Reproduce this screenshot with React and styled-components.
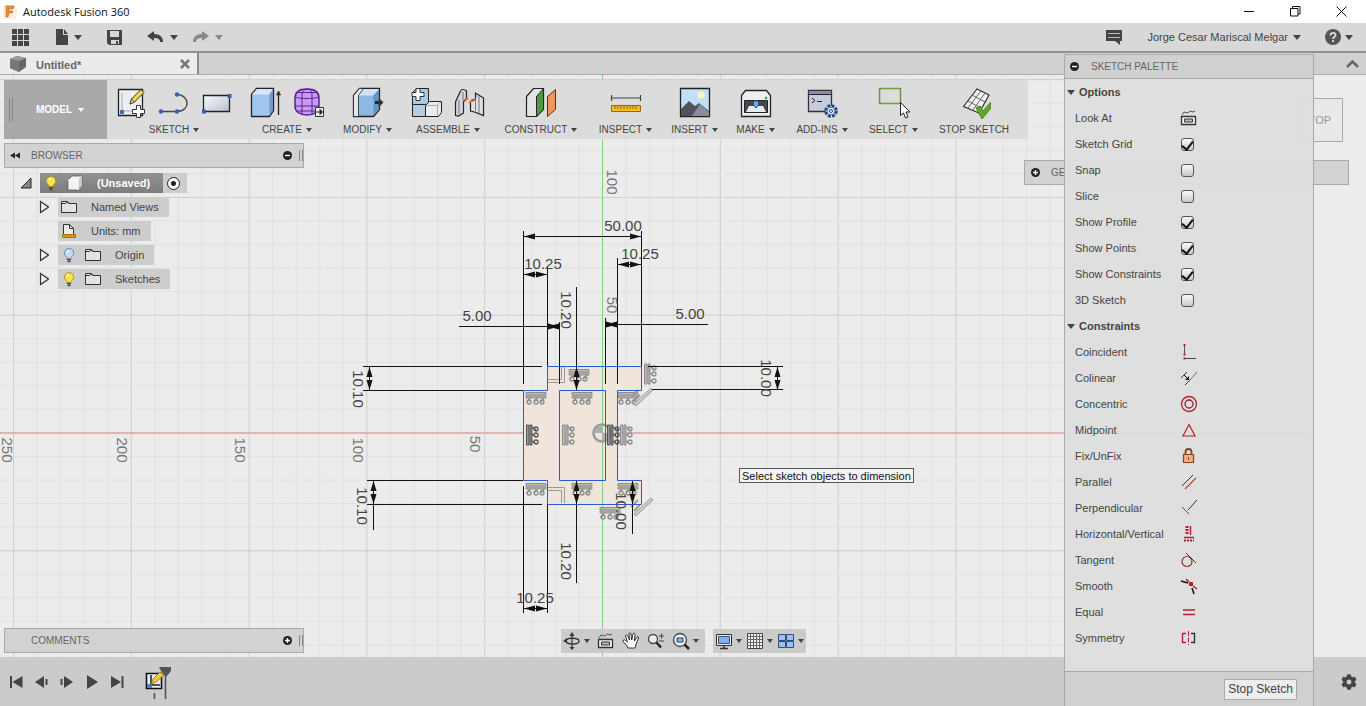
import React from "react";
import styled, { createGlobalStyle, css } from "styled-components";
import { FaCog } from "react-icons/fa";

const GlobalStyle = createGlobalStyle`
  * { box-sizing: border-box; }
  body {
    margin: 0;
    font-family: "Liberation Sans", Arial, sans-serif;
    font-size: 11px;
    color: #444;
  }
  button {
    font: inherit;
    color: inherit;
    background: none;
    border: 0;
    padding: 0;
  }
  svg { display: block; flex: none; }
`;

const App = styled.div`
  position: relative;
  display: flex;
  flex-direction: column;
  height: 100vh;
  min-width: 1100px;
  overflow: hidden;
  background: #ececec;
`;

// Title bar
const TitleBar = styled.header`
  display: flex;
  align-items: center;
  gap: 6px;
  height: 23px;
  padding: 0 2px 0 3px;
  background: #fff;
  color: #111;
`;

const AppTitle = styled.h1`
  margin: 0;
  flex: 1;
  font: 400 11px "Open Sans", sans-serif;
`;

const WindowButtons = styled.div`
  display: flex;
`;

const WindowButton = styled.button`
  display: grid;
  place-items: center;
  width: 46px;
  height: 21px;
`;

// Quick access bar
const QuickBar = styled.div`
  display: flex;
  align-items: center;
  gap: 24px;
  height: 30px;
  padding: 0 13px 0 10px;
  background: #d8d8d8;
  border-bottom: 2px solid #929292;
`;

const QuickPair = styled.div`
  display: flex;
  gap: 14px;
`;

const IconButton = styled.button`
  display: flex;
  align-items: center;
  gap: ${({ $gap }) => $gap || 0}px;
  color: ${({ $color }) => $color || "#444"};
`;

const Spacer = styled.div`
  flex: 1;
`;

const Caret = styled.span`
  display: inline-block;
  border: solid transparent;
  border-width: 5px 4px 0;
  border-top-color: currentColor;
`;

const SmallCaret = styled(Caret)`
  border-width: 4px 3px 0;
`;

// Document tabs
const TabStrip = styled.div`
  display: flex;
  align-items: center;
  justify-content: space-between;
  height: 22px;
  padding-right: 7px;
  background: #d0d0d0;
  border-bottom: 1px solid #aaa;
`;

const Tab = styled.div`
  display: flex;
  align-items: center;
  gap: 9px;
  width: 199px;
  height: 21px;
  padding: 0 7px 0 9px;
  background: #ebebeb;
  border-right: 2px solid #8c8c8c;
  font-weight: 700;
  color: #666;

  span { flex: 1; padding-top: 3px; }
`;

// Workspace
const Workspace = styled.main`
  position: relative;
  display: flex;
  flex: 1;
  flex-direction: column;
  min-height: 0;
  padding: 5px 4px 4px;
`;

const Canvas = styled.svg`
  position: absolute;
  inset: 0;
  width: 100%;
  height: 100%;
`;

const Toolbar = styled.div`
  position: relative;
  display: flex;
  align-self: flex-start;
  height: 59px;
  padding-right: 8px;
  background: #dcdcdc;
`;

const ModelButton = styled.button`
  display: flex;
  align-items: center;
  gap: 6px;
  width: 103px;
  padding-left: 5px;
  background: #a9a9a9;
  color: #fff;
  font-size: 10px;
  font-weight: 700;
`;

const Grip = styled.i`
  width: 4px;
  height: ${({ $height }) => $height}px;
  margin-right: ${({ $after }) => $after || 0}px;
  border: solid #888;
  border-width: 0 1px;
`;

const Group = styled.div`
  display: flex;
  flex-direction: column;
  align-items: center;
  gap: 4px;
  width: ${({ $width }) => $width}px;
  padding-top: 6px;
  position: relative;

  & + &::before {
    content: "";
    position: absolute;
    left: 0;
    top: 5px;
    bottom: 5px;
    width: 1px;
    background: #bfbfbf;
  }
`;

const GroupIcons = styled.div`
  display: flex;
  gap: 9px;
`;

const GroupLabel = styled.button`
  display: flex;
  align-items: center;
  gap: 4px;
  font-size: 10px;
  line-height: 12px;
  white-space: nowrap;
`;

const Middle = styled.div`
  position: relative;
  display: flex;
  flex: 1;
  justify-content: space-between;
  align-items: flex-start;
  padding: 4px 13px 0 0;
`;

const PanelBar = styled.div`
  display: flex;
  align-items: center;
  width: ${({ $width }) => $width || 300}px;
  height: 25px;
  padding: 0 0 0 5px;
  background: #d2d2d2;
  border: 1px solid #aaa;
  font-size: 10px;
  color: #666;

  h2 {
    flex: 1;
    margin: 0;
    padding-left: 10px;
    font-size: 10px;
    font-weight: 400;
  }
`;

const RightDock = styled.div`
  padding-top: 17px;
`;

const PanelGap = styled.span`
  width: 6px;
`;

const Tree = styled.ul`
  list-style: none;
  margin: 3px 0 0;
  padding: 0;
`;

const TreeRow = styled.li`
  display: flex;
  align-items: center;
  gap: ${({ $root }) => ($root ? 8 : 9)}px;
  height: 24px;
  padding-left: ${({ $root }) => ($root ? 16 : 33)}px;
`;

const Twisty = styled.button`
  width: 12px;
  height: 14px;
`;

const TreeItem = styled.div`
  display: flex;
  align-items: center;
  gap: 8px;
  height: 20px;
  padding: 0 10px 0 3px;
  background: #cdcdcd;

  span { padding-left: 6px; }

  ${({ $active }) => $active && css`
    padding-right: 13px;
    background: linear-gradient(#929292, #7c7c7c);
    color: #fff;
    font-weight: 700;
  `}
`;

const RootGroup = styled.div`
  display: flex;
  align-items: center;
  background: #cdcdcd;
`;

const Activate = styled.input`
  appearance: none;
  width: 13px;
  height: 13px;
  margin: 0 7px 0 4px;
  border: 1px solid #222;
  border-radius: 50%;
  background: radial-gradient(circle, #222 0 2px, #fff 3px);
`;

const Bottom = styled.div`
  position: relative;
  display: grid;
  grid-template-columns: 1fr auto 1fr;
  align-items: center;
`;

const NavBars = styled.nav`
  display: flex;
  gap: 8px;
`;

const NavBar = styled.div`
  display: flex;
  align-items: center;
  gap: ${({ $gap }) => $gap}px;
  height: 24px;
  padding: ${({ $pad }) => $pad};
  background: #cbcbcb;
`;

const ViewCube = styled.button`
  position: absolute;
  top: 23px;
  right: 23px;
  width: 46px;
  height: 44px;
  border: 1px solid #aaa;
  background: #e9e9e9;
  color: #999;
  font-size: 11px;
`;

const Hint = styled.div`
  position: absolute;
  left: 739px;
  top: 393px;
  height: 15px;
  padding: 0 2px;
  border: 1px solid #555;
  background: #f4f4f4;
  color: #111;
  line-height: 14px;
  white-space: nowrap;
`;

// Timeline
const Timeline = styled.footer`
  display: flex;
  align-items: center;
  height: 49px;
  padding: 0 9px 0 8px;
  background: #cbcbcb;
  color: #444;
`;

const Playback = styled.div`
  display: flex;
  gap: 7px;
  margin-right: 17px;
`;

// Sketch palette
const Palette = styled.aside`
  position: absolute;
  top: 54px;
  right: 52px;
  bottom: 0;
  display: flex;
  flex-direction: column;
  width: 250px;
  border: solid #aaa;
  border-width: 1px 1px 0;
  background: rgba(222, 222, 222, 0.97);
`;

const PaletteHeader = styled.div`
  display: flex;
  align-items: center;
  gap: 11px;
  height: 24px;
  padding-left: 4px;
  background: #d0d0d0;
  border-bottom: 1px solid #aaa;
  color: #666;
  font-size: 10px;
`;

const PaletteSection = styled.h3`
  display: flex;
  align-items: center;
  gap: 4px;
  height: 26px;
  margin: 0;
  padding-left: 2px;
  font-size: 11px;
`;

const rowStyle = css`
  display: grid;
  grid-template-columns: 105px 18px;
  align-items: center;
  width: 100%;
  height: 26px;
  padding-left: 10px;
  text-align: left;
`;

const OptionRow = styled.label`
  ${rowStyle}
`;

const CommandRow = styled.button`
  ${rowStyle}
`;

const Check = styled.input`
  appearance: none;
  display: flex;
  justify-content: center;
  align-items: flex-start;
  width: 13px;
  height: 13px;
  margin: 0 0 0 1px;
  border: 1px solid #555;
  border-radius: 3px;
  background: linear-gradient(#fafafa, #c8c8c8);

  &:checked::before {
    content: "";
    width: 5px;
    height: 9px;
    border: solid #111;
    border-width: 0 2px 2px 0;
    transform: rotate(38deg);
  }
`;

const PaletteFooter = styled.div`
  display: flex;
  align-items: center;
  justify-content: flex-end;
  height: 35px;
  margin-top: auto;
  padding-right: 16px;
  border-top: 1px solid #aaa;
  background: #d0d0d0;
`;

const StopButton = styled.button`
  height: 21px;
  padding: 0 3px;
  border: 1px solid #aaa;
  background: #ededed;
  font-size: 12px;
`;

const Icon = ({ size = 18, h, box, children, ...rest }) => (
  <svg width={size} height={h || size} viewBox={box || `0 0 ${size} ${h || size}`} fill="none" stroke="currentColor" aria-hidden="true" {...rest}>
    {children}
  </svg>
);

const Dot = ({ plus }) => (
  <Icon size={11}>
    <circle cx="5.5" cy="5.5" r="4.5" fill="#222" stroke="none" />
    <path d={plus ? "M3 5.5h5M5.5 3v5" : "M3 5.5h5"} stroke="#fff" strokeWidth="1.4" />
  </Icon>
);

const Bulb = ({ off }) => (
  <Icon size={16}>
    <path d="M8 1.500a4.500 4.500 0 0 0-3 8c1 1 1 1.500 1 2.500h4c0-1 0-1.500 1-2.500a4.500 4.500 0 0 0-3-8z" fill={off ? "#c4dafa" : "#fbe14c"} stroke={off ? "#7288b4" : "#b8932a"} />
    <path d="M6 12.500h4M6.500 14.500h3" stroke="#444" strokeWidth="1.500" />
    <path d="M6 5.500a2 2 0 0 1 2-2" stroke="#fff" />
  </Icon>
);

const Folder = () => (
  <Icon size={16}>
    <path d="M.5 13.500v-11h6l1 2h8v9z" fill="#e2e2e2" stroke="#333" />
    <path d="M.5 4.500h4l1-1h2" stroke="#333" />
  </Icon>
);

const CubeIcon = () => (
  <Icon size={16}>
    <path d="M1 5l4-4h10v10l-4 4H1z" fill="#f2f2f2" stroke="#555" strokeWidth=".7" />
    <path d="M11 5l4-4v10l-4 4z" fill="#c9c9c9" stroke="none" />
    <path d="M1 5h10v10" stroke="#fff" />
  </Icon>
);

const UnitsIcon = () => (
  <Icon size={16}>
    <path d="M2.500 12V1.500h6l4 4V12" fill="#eee" stroke="#333" />
    <path d="M8.500 1.500v4h4" stroke="#333" />
    <path d="M1.500 11.500h13v3h-13z" fill="#e9a817" stroke="#a8730b" />
    <path d="M4 12v1.500M7 12v1.500M10 12v1.500M13 12v1.500" stroke="#7a5200" strokeWidth=".7" />
  </Icon>
);

const toolIcons = {
  newSketch: (
    <Icon size={34}>
      <path d="M4.500 3.500h24v26h-24z" fill="#eceef3" stroke="#222" strokeWidth="1.300" />
      <path d="M8 7v18h14" stroke="#999" strokeWidth=".8" />
      <path d="M6 24h4v4H6z" fill="#3c70b8" stroke="none" />
      <path d="M16 18l1.500-5L27 3.500l3 3-9.500 9.500z" fill="#f5d548" stroke="#333" />
      <path d="M16 18l1.500-5 3 3z" fill="#f2d7b0" stroke="#333" strokeWidth=".8" />
      <path d="M22.500 19.500h4v4h4v4h-4v4h-4v-4h-4v-4h4z" fill="#fff" stroke="#333" />
    </Icon>
  ),
  line: (
    <Icon size={34}>
      <path d="M4 25.500h16c14 0 13-17-.500-17" stroke="#444" strokeWidth="1.300" />
      <circle cx="4" cy="25.500" r="2.200" fill="#3461b4" stroke="none" />
      <circle cx="20" cy="25.500" r="2.200" fill="#3461b4" stroke="none" />
      <circle cx="20" cy="8.500" r="2.200" fill="#3461b4" stroke="none" />
    </Icon>
  ),
  rectangle: (
    <Icon size={34}>
      <defs>
        <linearGradient id="rectFill" x1="0" y1="0" x2="1" y2="1">
          <stop offset="0" stopColor="#fafbfd" />
          <stop offset="1" stopColor="#b9bfcc" />
        </linearGradient>
      </defs>
      <path d="M3.500 9.500h26v16h-26z" fill="url(#rectFill)" stroke="#222" strokeWidth="1.300" />
      <path d="M2 23.500h4v4H2zM27.500 8h4v4h-4z" fill="#3461b4" stroke="none" />
    </Icon>
  ),
  extrude: (
    <Icon size={34}>
      <path d="M2.500 8.500l5-6h17v22l-4 6h-18z" fill="#9fc6ec" stroke="#222" strokeWidth="1.300" />
      <path d="M3 8.500l5-5.500h16l-4 5.500z" fill="#d6e8fa" stroke="none" />
      <path d="M20.500 8.500l3.500-5v21l-3.500 5z" fill="#6e9cce" stroke="none" />
      <path d="M29.500 29V6" stroke="#222" strokeWidth="1.300" />
      <path d="M27.500 9l2-4 2 4z" fill="#222" />
    </Icon>
  ),
  form: (
    <Icon size={34}>
      <path d="M3 12c0-6 4-9 12-9s12 3 12 9v8c0 6-5 9-12 9S3 26 3 20z" fill="#c89bf5" stroke="#5c2096" strokeWidth="1.500" />
      <path d="M3 11c5 2 19 2 24 0M3 20h24M10 9v19M20 9v19M10 9c0-4 3-6 5-6M20 9c0-4-2-6-5-6M6 6.500h18M5 25h20" stroke="#5c2096" />
      <path d="M23.500 21.500h8v9h-8z" fill="#eee" stroke="#333" />
      <path d="M24 26h4v-2.500l2.500 2.500-2.500 2.500V26" fill="#222" stroke="#222" />
    </Icon>
  ),
  pressPull: (
    <Icon size={34}>
      <path d="M2.500 9.500l6-7h20v21l-6 7h-20z" fill="#8db8e4" stroke="#222" strokeWidth="1.300" />
      <path d="M2.500 9.500l6-7h4l-5 7v21h-5z" fill="#e2e7ee" stroke="#222" strokeWidth=".8" />
      <path d="M8 9.500l5-6.500h15l-6 6.500z" fill="#cfe2f6" stroke="none" />
      <path d="M22.500 9.500l5.500-6v20l-5.500 6z" fill="#6693c7" stroke="none" />
      <path d="M24 16.500h5" stroke="#222" strokeWidth="3" />
      <path d="M28 12.500l4 4-4 4z" fill="#222" />
    </Icon>
  ),
  component: (
    <Icon size={34}>
      <path d="M2.500 6.500l4-4h12v15l-3 3h-13z" fill="#a9c8ea" stroke="#222" />
      <path d="M2.500 18.500h13v12h-13z" fill="#b7cbe0" stroke="#222" />
      <path d="M15.500 19.500l4-4h12v11l-3 4h-13z" fill="#e8ebef" stroke="#222" />
      <path d="M15.500 19.500h12v10M27.500 19.500l4-4" stroke="#aaa" />
      <path d="M6 2.500h4v4h4v4h-4v4H6v-4H2v-4h4z" fill="#fff" stroke="#333" />
    </Icon>
  ),
  joint: (
    <Icon size={34}>
      <path d="M2.500 29.500V16l5-11c1-2 4-2 6 0v7l-3 4v11l-5 3z" fill="#d3d8de" stroke="#222" strokeWidth="1.200" />
      <path d="M6 14v14M10 6v10" stroke="#777" />
      <path d="M30.500 29.500V12l-8-5v6l-5 3v9l4 1z" fill="#dde0e5" stroke="#222" strokeWidth="1.200" />
      <path d="M22.500 12v13M26 10v17" stroke="#777" />
      <path d="M12 15l3-3M16 17l4-4" stroke="#e8762c" strokeWidth="2" />
    </Icon>
  ),
  plane: (
    <Icon size={34}>
      <path d="M2.500 10.500l7-8h10v21l-7 7h-10z" fill="#e1e3e6" stroke="#222" strokeWidth="1.200" />
      <path d="M12.500 10.500l7-8v21l-7 7z" fill="#4c9a3c" stroke="#222" />
      <path d="M23.500 10.500l8-7v20l-8 7z" fill="#f0975a" stroke="#5b3018" />
    </Icon>
  ),
  measure: (
    <Icon size={34}>
      <path d="M2.500 9v6M31.500 9v6M3 12h28" stroke="#444" strokeWidth="1.200" />
      <path d="M2.500 19.500h29v6h-29z" fill="#f4bd2c" stroke="#99690c" />
      <path d="M6 20v3M9 20v3M12 20v3M15 20v3M18 20v3M21 20v3M24 20v3M27 20v3" stroke="#79540b" strokeWidth=".8" />
    </Icon>
  ),
  image: (
    <Icon size={34}>
      <path d="M2.500 2.500h29v28h-29z" fill="#bfe0f6" stroke="#222" strokeWidth="1.300" />
      <circle cx="23" cy="9" r="3.500" fill="#fdf5bd" stroke="none" />
      <path d="M3 23l8-8 6 5 4-3 10 8v5H3z" fill="#50535f" stroke="none" />
      <path d="M14 30l8-12 9 8v4z" fill="#888d99" stroke="none" />
    </Icon>
  ),
  printer: (
    <Icon size={34}>
      <path d="M2.500 9.500l4-5h21l4 5v21h-29z" fill="#eceef0" stroke="#222" strokeWidth="1.300" />
      <path d="M5.500 14.500h23v12h-23z" fill="#444851" stroke="#222" />
      <path d="M10 20h14l3 6H7z" fill="#e8eaee" stroke="none" />
      <path d="M14.500 15h5v4l-2.500 3-2.500-3z" fill="#78aaf0" stroke="#234a88" />
      <circle cx="27" cy="12" r="1.200" fill="#24a838" stroke="none" />
    </Icon>
  ),
  addins: (
    <Icon size={34}>
      <path d="M3.500 4.500h23v21h-23z" fill="#c7cbdc" stroke="#333" strokeWidth="1.300" />
      <path d="M4 6.500h22" stroke="#8a8fa4" strokeWidth="3" />
      <path d="M4 8.500h22M7 12l3 2.500L7 17M12 15.500h5" stroke="#222" />
      <circle cx="26" cy="25" r="5.500" fill="#d9e8fa" stroke="#1f4678" strokeWidth="2.500" strokeDasharray="3 1.300" />
      <circle cx="26" cy="25" r="4" fill="#d9e8fa" stroke="#3c6fae" />
      <circle cx="26" cy="25" r="1.500" fill="#fff" stroke="#1f4678" />
    </Icon>
  ),
  select: (
    <Icon size={34}>
      <path d="M2.500 2.500h21v15h-21z" stroke="#6e9d3e" strokeWidth="1.600" />
      <path d="M23.500 16.500v13l3-2.500 2 5 2.500-1-2-5h4z" fill="#fff" stroke="#222" />
    </Icon>
  ),
  stop: (
    <Icon size={34}>
      <path d="M6.500 20.500L20 3l12 6-10 18z" fill="#f1f1f1" stroke="#333" strokeWidth="1.200" />
      <path d="M11 22L24 5M16 24L28 7M11 15l13 7M15 9l13 7" stroke="#666" />
      <path d="M19 22l4-2 3 5 8-9v6l-9 11z" fill="#5fa62b" stroke="#4b8a20" />
    </Icon>
  ),
};

const groups = [
  { label: "SKETCH", width: 134, icons: ["newSketch", "line", "rectangle"] },
  { label: "CREATE", width: 92, icons: ["extrude", "form"] },
  { label: "MODIFY", width: 69, icons: ["pressPull"] },
  { label: "ASSEMBLE", width: 92, icons: ["component", "joint"] },
  { label: "CONSTRUCT", width: 94, icons: ["plane"] },
  { label: "INSPECT", width: 75, icons: ["measure"] },
  { label: "INSERT", width: 63, icons: ["image"] },
  { label: "MAKE", width: 59, icons: ["printer"] },
  { label: "ADD-INS", width: 74, icons: ["addins"] },
  { label: "SELECT", width: 69, icons: ["select"] },
  { label: "STOP SKETCH", width: 92, icons: ["stop"], plain: true },
];

const tree = [
  { label: "Named Views", icons: [<Folder key="f" />], open: true },
  { label: "Units: mm", icons: [<UnitsIcon key="u" />] },
  { label: "Origin", icons: [<Bulb key="b" off />, <Folder key="f" />], open: true },
  { label: "Sketches", icons: [<Bulb key="b" />, <Folder key="f" />], open: true },
];

const options = [
  ["Sketch Grid", true],
  ["Snap", false],
  ["Slice", false],
  ["Show Profile", true],
  ["Show Points", true],
  ["Show Constraints", true],
  ["3D Sketch", false],
];

const RED = "#b3202c";

const constraints = [
  ["Coincident", <><path d="M4.500 3v9" stroke="#555" /><path d="M4 15.500h12" stroke="#444" /><path d="M3.500 2h2M3.500 11.500h2M3.500 15.500h2" stroke={RED} strokeWidth="2" /></>],
  ["Colinear", <><path d="M1 9l6-6M5 16l5-5" stroke="#333" /><path d="M10 11l7-8" stroke="#a35a3a" /><path d="M4 6l4 4" stroke="#111" /><path d="M9 11V7l-4 4z" fill="#111" stroke="none" /></>],
  ["Concentric", <><circle cx="9" cy="9" r="7.500" stroke={RED} strokeWidth="1.300" /><circle cx="9" cy="9" r="4" stroke="#8a2430" strokeWidth="1.300" /></>],
  ["Midpoint", <path d="M9 3.500L15 15H3z" stroke={RED} strokeWidth="1.200" />],
  ["Fix/UnFix", <><path d="M5.500 8V5a3 3 0 0 1 6 0v3" stroke="#8c3f14" strokeWidth="1.800" /><path d="M3.500 7.500h10v8h-10z" fill="#f2b184" stroke="#8c3f14" strokeWidth="1.200" /><path d="M8.500 10v3" stroke="#8c3f14" /></>],
  ["Parallel", <><path d="M2 13L13 2" stroke="#333" /><path d="M5 16L16 5" stroke="#b0502e" strokeWidth="1.200" /></>],
  ["Perpendicular", <><path d="M8 11l9-10" stroke="#333" /><path d="M2 8l7 7" stroke={RED} /></>],
  ["Horizontal/Vertical", <><path d="M10.500 1v9M4 12.500h10" stroke={RED} strokeWidth="1.500" /><path d="M7 1v9" stroke={RED} strokeWidth="3" strokeDasharray="2 1" /><path d="M4 15.500h10" stroke={RED} strokeWidth="2" strokeDasharray="2 1" /></>],
  ["Tangent", <><circle cx="7" cy="10.500" r="5" stroke="#8c3f24" strokeWidth="1.200" /><path d="M6 2l10 10" stroke="#333" /></>],
  ["Smooth", <><path d="M1 4l7 2M12 11l2 6" stroke="#111" strokeWidth="1.500" /><path d="M6 2l3 3M13 9l4 3" stroke={RED} strokeWidth="1.500" /><path d="M9.500 5.500h3v3h-3z" fill="#d4101c" stroke={RED} /></>],
  ["Equal", <path d="M3 7h12M3 11.500h12" stroke={RED} strokeWidth="1.300" />],
  ["Symmetry", <><path d="M6 4.500H2.500v9H6" stroke={RED} strokeWidth="1.400" /><path d="M11 4.500h3.500v9H11" stroke="#333" strokeWidth="1.400" /><path d="M8.500 2v14" stroke={RED} strokeDasharray="5 1.500" /></>],
];

// Canvas drawing helpers, 10 mm is 23.56 units
const STEP = 23.56;
const OX = 602.5;
const OY = 433;

function gridLines() {
  const lines = [];
  for (let i = -25; i <= 29; i++) {
    const x = OX + i * STEP;
    lines.push(<path key={"v" + i} d={`M${x} 75V657`} stroke={i % 5 === 0 ? "#cecece" : "#e1e1e1"} />);
  }
  for (let i = -15; i <= 9; i++) {
    const y = OY + i * STEP;
    lines.push(<path key={"h" + i} d={`M0 ${y}H1310`} stroke={i % 5 === 0 ? "#cecece" : "#e1e1e1"} />);
  }
  return lines;
}

const Down = ({ x, y }) => <path d={`M${x} ${y}l-3-10h6z`} />;
const Up = ({ x, y }) => <path d={`M${x} ${y}l-3 10h6z`} />;
const Left = ({ x, y }) => <path d={`M${x} ${y}l11-3v6z`} />;
const Right = ({ x, y }) => <path d={`M${x} ${y}l-11-3v6z`} />;

const Label = ({ x, y, turn, children }) => (
  <text x={x} y={y} textAnchor="middle" dominantBaseline="central" transform={turn ? `rotate(90 ${x} ${y})` : undefined}>
    {children}
  </text>
);

const Mark = ({ x, y, turn, dark }) => (
  <g transform={`translate(${x} ${y}) rotate(${turn ? -90 : 0})`} stroke={dark ? "#555" : "#8c8c8c"} fill="none">
    <path d="M-10-5.500h20v2.500h-20zM-10-2h20v2h-20z" fill={dark ? "#999" : "#bbb"} />
    <path d="M-6 0l-3 4M1 0l-3 4M8 0L5 4" strokeWidth="1.500" />
    <circle cx="-7" cy="4" r="2" strokeWidth="1.300" />
    <circle cx="0" cy="4" r="2" strokeWidth="1.300" />
    <circle cx="6" cy="4" r="2" strokeWidth="1.300" />
  </g>
);

const Slash = ({ x, y }) => (
  <g transform={`translate(${x} ${y})`} stroke="#999" fill="#ccc">
    <path d="M-9 7L8-9l2 2L-7 9z" />
    <path d="M-12 0l7-7M-9 4l6-6" strokeWidth="2" />
  </g>
);

const Drawing = () => (
  <Canvas viewBox="0 75 1366 582" preserveAspectRatio="xMidYMid slice" role="img" aria-label="Sketch">
    {gridLines()}
    <path d="M0 433H1310" stroke="#d98f8f" />
    <path d="M547.500 366.500H641.500V390.500H617.500V480.500H641.500V504.500H547.500V480.500H523.500V390.500H547.500z" fill="#efe5da" />
    <path d="M602.500 75V657" stroke="#84cf84" />
    <g fill="none" stroke="#999">
      <path d="M548 382.500h16.500V367M548 379.500h13.500V367M548 487.500h16.500V503M548 490.500h13.500V503" />
    </g>
    <circle cx="602" cy="433" r="8.500" fill="none" stroke="#9a9a9a" strokeWidth="2.500" />
    <path d="M602 433h-8a8 8 0 0 1 8-8zM602 433h8a8 8 0 0 1-8 8z" fill="#b0aca8" />
    {[[536, 398], [582, 398], [628, 398], [579, 375], [536, 489], [582, 489], [628, 489], [610, 513]].map(([x, y]) => (
      <Mark key={x + "-" + y} x={x} y={y} />
    ))}
    <Mark x={532} y={435} turn dark />
    <Mark x={568} y={435} turn />
    <Mark x={613} y={435} turn dark />
    <Mark x={626} y={435} turn />
    <Mark x={650} y={374} turn />
    <Slash x={643} y={397} />
    <Slash x={643} y={507} />
    <g stroke="#111" strokeWidth="1" fill="none">
      <path d="M523.500 231V384M523.500 486V613M547.500 267V366M547.500 504V613M641.500 231V366M617.500 258V384M559.500 322V384M605.500 318V384" />
      <path d="M524 236.500H641M524 274.500H547M618 264.500H641M459 326.500H559M606 324.500H708M524 608.500H547" />
      <path d="M576.500 287V390M576.500 480V583M632.500 480V534M369.500 366V390M373.500 480V530M777.500 366V390" />
      <path d="M363 366.500H542M363 390.500H523M367 480.500H523M367 504.500H542M648 366.500H783M652 389.500H783" />
    </g>
    <g stroke="#2a5bd4" fill="none">
      <path d="M547.500 366.500H641.500V390.500H617.500V480.500H641.500V504.500H547.500V480.500H523.500V390.500H547.500z" />
      <path d="M559.500 390.500h46v90h-46z" />
    </g>
    <g fill="#111">
      <Left x={524} y={236.5} /><Right x={641} y={236.5} />
      <Left x={524} y={274.5} /><Right x={547} y={274.5} />
      <Left x={618} y={264.5} /><Right x={641} y={264.5} />
      <Left x={524} y={608.5} /><Right x={547} y={608.5} />
      <Left x={548} y={326.5} /><Right x={559} y={326.5} />
      <Left x={606} y={324.5} /><Right x={617} y={324.5} />
      <Up x={369.5} y={367} /><Down x={369.5} y={390} />
      <Up x={373.5} y={481} /><Down x={373.5} y={504} />
      <Up x={777.5} y={367} /><Down x={777.5} y={390} />
      <Up x={576.5} y={367} /><Down x={576.5} y={390} />
      <Up x={576.5} y={481} /><Down x={576.5} y={504} />
      <Up x={632.5} y={481} /><Down x={632.5} y={504} />
    </g>
    <g fill="#444" fontSize="15">
      <Label x={623} y={225}>50.00</Label>
      <Label x={543} y={263}>10.25</Label>
      <Label x={640} y={253}>10.25</Label>
      <Label x={477} y={315}>5.00</Label>
      <Label x={690} y={313}>5.00</Label>
      <Label x={535} y={597}>10.25</Label>
      <Label x={566} y={310} turn>10.20</Label>
      <Label x={566} y={561} turn>10.20</Label>
      <Label x={358} y={389} turn>10.10</Label>
      <Label x={362} y={506} turn>10.10</Label>
      <Label x={766} y={378} turn>10.00</Label>
      <Label x={621} y={511} turn>10.00</Label>
    </g>
    <g fill="#777" fontSize="15">
      <Label x={7} y={450} turn>250</Label>
      <Label x={122} y={450} turn>200</Label>
      <Label x={240} y={450} turn>150</Label>
      <Label x={358} y={450} turn>100</Label>
      <Label x={475} y={444} turn>50</Label>
      <Label x={612} y={182} turn>100</Label>
      <Label x={612} y={305} turn>50</Label>
    </g>
  </Canvas>
);

const LookAt = () => (
  <Icon>
    <path d="M1.500 7.500h14v8h-14z" fill="#f4f4f4" stroke="#333" strokeWidth="1.300" />
    <path d="M4.500 10h8v3h-8z" fill="#bbb" stroke="#333" />
    <path d="M2 6l2-3 4 1 2-2 3 1 2-1" stroke="#555" />
  </Icon>
);

const playback = [
  ["First", <><path d="M3 3v12" strokeWidth="2" /><path d="M14.500 3v12l-10-6z" fill="currentColor" stroke="none" /></>],
  ["Step back", <><path d="M11 3v12L2 9z" fill="currentColor" stroke="none" /><path d="M13.500 6v6" strokeWidth="2" /></>],
  ["Step forward", <><path d="M6 3v12l9-6z" fill="currentColor" stroke="none" /><path d="M3.500 6v6" strokeWidth="2" /></>],
  ["Play", <path d="M4 2v14l11-7z" fill="currentColor" stroke="none" />],
  ["Last", <><path d="M14.500 3v12" strokeWidth="2" /><path d="M3 3v12l10-6z" fill="currentColor" stroke="none" /></>],
];

export default function FusionWindow() {
  return (
    <App>
      <GlobalStyle />
      <TitleBar>
        <Icon size={14}>
          <path d="M0 0h14v14H0z" fill="#fdf0df" stroke="none" />
          <path d="M3 12V1h8l-1 3H6v2h4L9 8H6l-1 4z" fill="#ee8c2a" stroke="#b9652a" strokeWidth=".6" />
        </Icon>
        <AppTitle>Autodesk Fusion 360</AppTitle>
        <WindowButtons>
          <WindowButton aria-label="Minimize"><Icon size={11}><path d="M0 5.500h10" /></Icon></WindowButton>
          <WindowButton aria-label="Restore"><Icon size={11}><path d="M.5 2.500h7.500V10H.5zM2.500 2V.5H10V8H8" /></Icon></WindowButton>
          <WindowButton aria-label="Close"><Icon size={11}><path d="M.5.5l10 10M10.500.5l-10 10" /></Icon></WindowButton>
        </WindowButtons>
      </TitleBar>

      <QuickBar>
        <IconButton aria-label="Data panel">
          <Icon size={20}><path d="M2 4.500h17M2 10.500h17M2 16.500h17" strokeWidth="5" strokeDasharray="5 1" /></Icon>
        </IconButton>
        <IconButton aria-label="File" $gap={4}>
          <Icon size={16}><path d="M2 0h7v6h5v10H2zM10 0l4 5h-4z" fill="currentColor" stroke="none" /></Icon>
          <Caret />
        </IconButton>
        <IconButton aria-label="Save">
          <Icon size={17}>
            <path d="M1 1h15v15H3l-2-2z" fill="currentColor" stroke="none" />
            <path d="M4 2h9v6H4zM5 11h8v4H5z" fill="#d8d8d8" stroke="none" />
            <path d="M10 12h2v3h-2z" fill="currentColor" stroke="none" />
          </Icon>
        </IconButton>
        <QuickPair>
          <IconButton aria-label="Undo" $gap={6}>
            <Icon size={17}><path d="M0 7l7-5v3c6 0 9 3 9 8h-3c0-3-2-4-6-4v3z" fill="currentColor" stroke="none" /></Icon>
            <Caret />
          </IconButton>
          <IconButton aria-label="Redo" $gap={6} $color="#888">
            <Icon size={17}><path d="M17 7l-7-5v3C4 5 1 8 1 13h3c0-3 2-4 6-4v3z" fill="currentColor" stroke="none" /></Icon>
            <Caret />
          </IconButton>
        </QuickPair>
        <Spacer />
        <IconButton aria-label="Notifications">
          <Icon size={18}><path d="M1 2h16v11h-2v4l-5-4H1z" fill="currentColor" stroke="none" /><path d="M3 5.500h12M3 9.500h12" stroke="#bbb" /></Icon>
        </IconButton>
        <IconButton $gap={5}>Jorge Cesar Mariscal Melgar<Caret /></IconButton>
        <IconButton aria-label="Help" $gap={4}>
          <Icon size={16}>
            <circle cx="8" cy="8" r="8" fill="#555" stroke="none" />
            <path d="M5.500 6.500c0-3.500 5-3.500 5-.5 0 2-2.500 2-2.500 4M8 11v2" stroke="#ddd" strokeWidth="1.800" />
          </Icon>
          <Caret />
        </IconButton>
      </QuickBar>

      <TabStrip>
        <Tab>
          <Icon size={18}>
            <path d="M1 4l7-3 9 2v9l-7 5-9-4z" fill="#666" stroke="none" />
            <path d="M1 4l9 2v11l-9-4z" fill="#777" stroke="none" />
            <path d="M1 4l7-3 9 2-7 3z" fill="#999" stroke="none" />
          </Icon>
          <span>Untitled*</span>
          <IconButton aria-label="Close tab" $color="#777"><Icon size={10}><path d="M1 1l8 8M9 1L1 9" strokeWidth="2.500" /></Icon></IconButton>
        </Tab>
        <IconButton aria-label="Collapse toolbar" $color="#666"><Icon size={13} h={9}><path d="M1 8l5.500-5.500L12 8" strokeWidth="2.500" /></Icon></IconButton>
      </TabStrip>

      <Workspace>
        <Drawing />
        <Toolbar>
          <ModelButton><Grip $height={24} $after={17} />MODEL<SmallCaret /></ModelButton>
          {groups.map(g => (
            <Group key={g.label} $width={g.width}>
              <GroupIcons>
                {g.icons.map(name => <IconButton key={name} aria-label={name}>{toolIcons[name]}</IconButton>)}
              </GroupIcons>
              <GroupLabel>{g.label}{!g.plain && <SmallCaret />}</GroupLabel>
            </Group>
          ))}
        </Toolbar>

        <Middle>
          <div>
            <PanelBar>
              <Icon size={11}><path d="M5 2.500v6L0 5.500zM10 2.500v6L5 5.500z" fill="#222" stroke="none" /></Icon>
              <h2>BROWSER</h2>
              <Dot />
              <PanelGap />
              <Grip $height={11} />
            </PanelBar>
            <Tree>
              <TreeRow $root>
                <Twisty aria-label="Collapse"><Icon size={12}><path d="M11 1v10H1z" fill="#888" stroke="#222" /></Icon></Twisty>
                <RootGroup>
                  <TreeItem $active><Bulb /><CubeIcon /><span>(Unsaved)</span></TreeItem>
                  <Activate type="radio" name="active" aria-label="Activate component" defaultChecked />
                </RootGroup>
              </TreeRow>
              {tree.map(item => (
                <TreeRow key={item.label}>
                  {item.open
                    ? <Twisty aria-label="Expand"><Icon size={12} h={14}><path d="M3.500 1.500l8 5.500-8 5.500z" fill="#eee" stroke="#333" strokeWidth="1.200" /></Icon></Twisty>
                    : <Twisty disabled aria-hidden="true" />}
                  <TreeItem>{item.icons}<span>{item.label}</span></TreeItem>
                </TreeRow>
              ))}
            </Tree>
          </div>
          <RightDock>
            <PanelBar $width={325}><Dot plus /><h2>GE</h2></PanelBar>
          </RightDock>
        </Middle>

        <Bottom>
          <PanelBar>
            <Icon size={11} />
            <h2>COMMENTS</h2>
            <Dot plus />
            <PanelGap />
            <Grip $height={11} />
          </PanelBar>
          <NavBars>
            <NavBar $gap={7} $pad="0 6px 0 2px">
              <IconButton aria-label="Orbit" $gap={3}>
                <Icon>
                  <path d="M9 3v13" strokeWidth="1.300" />
                  <path d="M9 0l2.500 4h-5zM9 18l-2.500-3h5zM0 9l4-3v5z" fill="#333" stroke="none" />
                  <path d="M3 8c3-3 13-2 13 1 0 2-3 3-6 3s-5 0-7-2" stroke="#333" strokeWidth="1.300" />
                </Icon>
                <SmallCaret />
              </IconButton>
              <IconButton aria-label="Look at"><LookAt /></IconButton>
              <IconButton aria-label="Pan">
                <Icon>
                  <path d="M6 16c-1-3-4-5-5-7 0-1.500 1.500-1.500 2.500-.5L5.500 10 3.500 4c0-1.500 1.500-1.500 2-.5L7.500 8 7 2c0-1.500 2-1.500 2 0l.7 6L11 2c.3-1.500 2-1 2 .3L12.500 9 15 5c.8-1 2-.3 1.500 1L14 12l-1 4z" fill="#fff" stroke="#333" />
                </Icon>
              </IconButton>
              <IconButton aria-label="Zoom">
                <Icon>
                  <circle cx="6" cy="7" r="4.500" fill="#eee" stroke="#444" strokeWidth="1.300" />
                  <path d="M9.500 10.500l4.500 5" stroke="#222" strokeWidth="2.500" />
                  <path d="M12 4h5M14.500 1.500v5M12 9h5" />
                </Icon>
              </IconButton>
              <IconButton aria-label="Fit" $gap={3}>
                <Icon>
                  <circle cx="8" cy="8" r="6.500" fill="#e8eef6" stroke="#444" strokeWidth="1.300" />
                  <path d="M5 6h6v4H5z" fill="#8fb3df" stroke="#345" />
                  <path d="M12.500 12.500L17 17" stroke="#222" strokeWidth="2.500" />
                </Icon>
                <SmallCaret />
              </IconButton>
            </NavBar>
            <NavBar $gap={4} $pad="0 2px">
              <IconButton aria-label="Display settings" $gap={3}>
                <Icon>
                  <path d="M1.500 2.500h15v11h-15z" fill="#eee" stroke="#333" />
                  <path d="M3.500 4.500h11v7h-11z" fill="#7fb0e8" stroke="#31588c" />
                  <path d="M9 14v2M5 16.500h8" stroke="#333" strokeWidth="1.500" />
                </Icon>
                <SmallCaret />
              </IconButton>
              <IconButton aria-label="Grid and snaps" $gap={3}>
                <Icon>
                  <path d="M1.500 1.500h15v15h-15z" fill="#f2f2f2" stroke="#444" />
                  <path d="M4.500 1v15M7.500 1v15M10.500 1v15M13.500 1v15M1 4.500h15M1 7.500h15M1 10.500h15M1 13.500h15" stroke="#666" />
                </Icon>
                <SmallCaret />
              </IconButton>
              <IconButton aria-label="Viewports" $gap={3}>
                <Icon>
                  <path d="M1.500 2.500h7v6h-7zM9.500 2.500h7v6h-7zM1.500 9.500h7v6h-7zM9.500 9.500h7v6h-7z" fill="#9cc2ec" stroke="#2b4f80" />
                </Icon>
                <SmallCaret />
              </IconButton>
            </NavBar>
          </NavBars>
        </Bottom>

        <ViewCube>TOP</ViewCube>
        <Hint role="tooltip">Select sketch objects to dimension</Hint>
      </Workspace>

      <Timeline>
        <Playback>
          {playback.map(([name, shape]) => (
            <IconButton key={name} aria-label={name}><Icon>{shape}</Icon></IconButton>
          ))}
        </Playback>
        <IconButton aria-label="Sketch1">
          <Icon size={30} h={34}>
            <path d="M3.500 8.500h15v15h-15z" fill="#e6f0fa" stroke="#111" strokeWidth="1.600" />
            <path d="M8 10v10h9" stroke="#222" strokeWidth="1.500" />
            <path d="M4 19h5v4H4z" fill="#4c7fb8" stroke="none" />
            <path d="M8 19l2-5 7-7 4 3-8 7z" fill="#f3c83a" stroke="#8a6914" strokeWidth=".8" />
            <path d="M16 2h12v4l-5 6-5-6z" fill="#555" stroke="none" />
            <path d="M22.500 8v26M11.500 28v6" stroke="#555" strokeWidth="1.600" />
          </Icon>
        </IconButton>
        <Spacer />
        <IconButton aria-label="Timeline settings"><FaCog size={16} /></IconButton>
      </Timeline>

      <Palette>
        <PaletteHeader><Dot />SKETCH PALETTE</PaletteHeader>
        <PaletteSection><Caret />Options</PaletteSection>
        <CommandRow>Look At<LookAt /></CommandRow>
        {options.map(([name, on]) => (
          <OptionRow key={name}>{name}<Check type="checkbox" defaultChecked={on} /></OptionRow>
        ))}
        <PaletteSection><Caret />Constraints</PaletteSection>
        {constraints.map(([name, shape]) => (
          <CommandRow key={name}>{name}<Icon>{shape}</Icon></CommandRow>
        ))}
        <PaletteFooter><StopButton>Stop Sketch</StopButton></PaletteFooter>
      </Palette>
    </App>
  );
}
